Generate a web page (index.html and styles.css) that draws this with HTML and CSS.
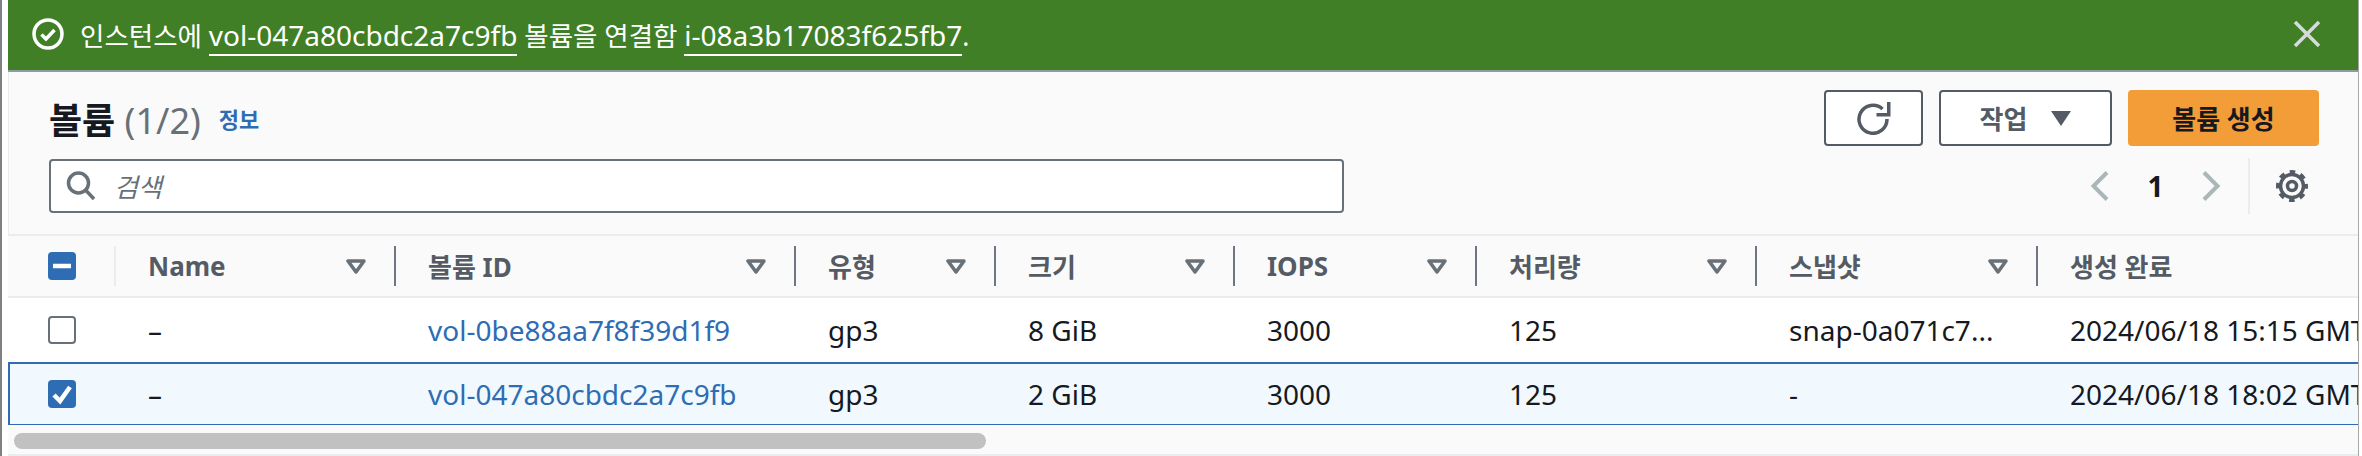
FILE: index.html
```html
<!DOCTYPE html>
<html lang="ko">
<head>
    <meta charset="UTF-8">
    <title>볼륨</title>
    <link rel="stylesheet" href="styles.css">
</head>
<body>
    <div class="frame">
        <!-- Flash message -->
        <div class="flash">
            <svg class="flash-icon" viewBox="0 0 32 32"><circle cx="16" cy="16" r="14"/><path d="M9.500 16.500l4.500 4.500 8.500-9"/></svg>
            <span class="flash-text">인스턴스에 <a>vol-047a80cbdc2a7c9fb</a> 볼륨을 연결함 <a>i-08a3b17083f625fb7</a>.</span>
            <svg class="flash-close" viewBox="0 0 28 28"><path d="M2 2l24 24M26 2L2 26"/></svg>
        </div>

        <!-- Header -->
        <div class="panel-head">
            <div class="title-row">
                <h2>볼륨 <span class="count">(1/2)</span></h2>
                <a class="info">정보</a>
                <div class="actions">
                    <button class="btn btn-icon">
                        <svg viewBox="0 0 34 34"><path class="stroke" d="M25.500 8A14 14 0 1 0 30 18"/><path class="fill" d="M30 1h3.500v14.500h-14v-3.500h10.500z"/></svg>
                    </button>
                    <button class="btn btn-menu">작업<span class="caret"></span></button>
                    <button class="btn btn-primary">볼륨 생성</button>
                </div>
            </div>
            <div class="filter-row">
                <div class="search">
                    <svg viewBox="0 0 32 32"><circle cx="13.500" cy="13" r="10"/><path d="M21 20.500l8 8.500"/></svg>
                    <span>검색</span>
                </div>
                <div class="pager">
                    <svg class="chev" viewBox="0 0 20 32"><path d="M17 2.500L3.500 16 17 29.500"/></svg>
                    <span class="page-no">1</span>
                    <svg class="chev" viewBox="0 0 20 32"><path d="M3 2.500L16.500 16 3 29.500"/></svg>
                    <div class="pager-gear">
                        <svg viewBox="0 0 34 34"><circle class="teeth" cx="17" cy="17" r="14"/><circle cx="17" cy="17" r="11.500"/><circle cx="17" cy="17" r="4.500"/></svg>
                    </div>
                </div>
            </div>
        </div>

        <!-- Volumes table -->
        <div class="table-wrap">
            <table>
                <colgroup>
                    <col class="c-check"><col class="c-name"><col class="c-id"><col class="c-type"><col class="c-size"><col class="c-iops"><col class="c-thru"><col class="c-snap"><col class="c-date">
                </colgroup>
                <thead>
                    <tr>
                        <th><div class="th-in first"><span class="box on"><svg viewBox="0 0 28 28"><path d="M5 14h18"/></svg></span></div></th>
                        <th><div class="th-in"><span>Name</span><svg class="sort" viewBox="0 0 20 15"><path d="M2 2h16l-8 11z"/></svg></div></th>
                        <th><div class="th-in"><span>볼륨 ID</span><svg class="sort" viewBox="0 0 20 15"><path d="M2 2h16l-8 11z"/></svg></div></th>
                        <th><div class="th-in"><span>유형</span><svg class="sort" viewBox="0 0 20 15"><path d="M2 2h16l-8 11z"/></svg></div></th>
                        <th><div class="th-in"><span>크기</span><svg class="sort" viewBox="0 0 20 15"><path d="M2 2h16l-8 11z"/></svg></div></th>
                        <th><div class="th-in"><span>IOPS</span><svg class="sort" viewBox="0 0 20 15"><path d="M2 2h16l-8 11z"/></svg></div></th>
                        <th><div class="th-in"><span>처리량</span><svg class="sort" viewBox="0 0 20 15"><path d="M2 2h16l-8 11z"/></svg></div></th>
                        <th><div class="th-in"><span>스냅샷</span><svg class="sort" viewBox="0 0 20 15"><path d="M2 2h16l-8 11z"/></svg></div></th>
                        <th><div class="th-in last"><span>생성 완료</span></div></th>
                    </tr>
                </thead>
                <tbody>
                    <tr>
                        <td class="check-cell"><span class="box"></span></td>
                        <td>–</td>
                        <td><a>vol-0be88aa7f8f39d1f9</a></td>
                        <td>gp3</td>
                        <td>8 GiB</td>
                        <td>3000</td>
                        <td>125</td>
                        <td>snap-0a071c7...</td>
                        <td>2024/06/18 15:15 GMT+9</td>
                    </tr>
                    <tr class="selected">
                        <td class="check-cell"><span class="box on"><svg viewBox="0 0 28 28"><path d="M6 15l6 6 10-14"/></svg></span></td>
                        <td>–</td>
                        <td><a>vol-047a80cbdc2a7c9fb</a></td>
                        <td>gp3</td>
                        <td>2 GiB</td>
                        <td>3000</td>
                        <td>125</td>
                        <td>-</td>
                        <td>2024/06/18 18:02 GMT+9</td>
                    </tr>
                </tbody>
            </table>
        </div>

        <!-- Scrollbar -->
        <div class="scroll-track"><div class="scroll-thumb"></div></div>
    </div>
</body>
</html>
```

FILE: styles.css
```css
* {
    box-sizing: border-box;
}
html, body {
    margin: 0;
    height: 456px;
    overflow: hidden;
    background: #fff;
}
body {
    font-family: "Noto Sans", "Noto Sans CJK KR", sans-serif;
    font-size: 28px;
    color: #16191f;
}
.frame {
    width: 2359px;
    height: 456px;
    padding-left: 6px;
    border-left: 2px solid #808080;
    border-right: 1px solid #a8a8a8;
    background: #fff;
}

/* flash */
.flash {
    height: 72px;
    padding: 0 37px 2px 24px;
    background: #407f26;
    border-bottom: 2px solid #8c9ca0;
    color: #fff;
    display: flex;
    align-items: center;
}
.flash-icon {
    width: 32px;
    height: 32px;
    fill: none;
    stroke: #fff;
    stroke-width: 3.500;
    margin-right: 16px;
}
.flash-text {
    font-size: 26.500px;
}
.flash-text a {
    font-size: 28px;
    text-decoration: none;
    border-bottom: 2px solid #fff;
}
.flash-close {
    width: 28px;
    height: 28px;
    margin-left: auto;
    fill: none;
    stroke: #d5dbdb;
    stroke-width: 3.500;
}

/* header */
.panel-head {
    height: 162px;
    padding: 18px 39px 0 40px;
    background: #fafafa;
    border-left: 1px solid #e9ebed;
}
.title-row {
    display: flex;
    align-items: center;
    height: 56px;
}
h2 {
    margin: 0;
    font-size: 36px;
    font-weight: 700;
}
.count {
    font-weight: 400;
    color: #687078;
}
.info {
    margin-left: 18px;
    font-size: 22px;
    font-weight: 700;
    color: #2e6db4;
}
.actions {
    margin-left: auto;
    display: flex;
    gap: 16px;
}
.btn {
    height: 56px;
    border: 2px solid #545b64;
    border-radius: 4px;
    background: #fff;
    color: #545b64;
    font: inherit;
    font-weight: 700;
    font-size: 26px;
    display: flex;
    align-items: center;
    justify-content: center;
}
.btn-icon {
    width: 99px;
}
.btn-icon svg {
    width: 34px;
    height: 34px;
}
.btn-icon .stroke {
    fill: none;
    stroke: #545b64;
    stroke-width: 3.500;
}
.btn-icon .fill {
    fill: #545b64;
}
.btn-menu {
    width: 173px;
    gap: 24px;
}
.caret {
    width: 0;
    height: 0;
    border-left: 10px solid transparent;
    border-right: 10px solid transparent;
    border-top: 15px solid #545b64;
}
.btn-primary {
    width: 191px;
    background: #f29d38;
    border-color: #f29d38;
    color: #16191f;
}
.filter-row {
    display: flex;
    align-items: center;
    margin-top: 13px;
    height: 54px;
}
.search {
    width: 1295px;
    height: 54px;
    background: #fff;
    border: 2px solid #687078;
    border-radius: 4px;
    padding-left: 14px;
    display: flex;
    align-items: center;
    gap: 17px;
    color: #687078;
    font-size: 26px;
    font-style: italic;
}
.search svg {
    width: 32px;
    height: 32px;
    fill: none;
    stroke: #687078;
    stroke-width: 3.500;
}
.pager {
    margin-left: auto;
    margin-right: 10px;
    display: flex;
    align-items: center;
    height: 56px;
}
.chev {
    width: 20px;
    height: 32px;
    fill: none;
    stroke: #aab7b8;
    stroke-width: 4;
}
.page-no {
    width: 91px;
    text-align: center;
    font-weight: 700;
}
.pager-gear {
    margin-left: 27px;
    padding-left: 25px;
    height: 56px;
    border-left: 2px solid #eaeded;
    display: flex;
    align-items: center;
}
.pager-gear svg {
    width: 34px;
    height: 34px;
    fill: none;
    stroke: #545b64;
    stroke-width: 3.500;
}
.pager-gear .teeth {
    stroke-width: 4;
    stroke-dasharray: 5.500 5.500;
    stroke-dashoffset: 2.750;
}

/* table */
.table-wrap {
    overflow: hidden;
    height: 191px;
    background: #fff;
}
table {
    table-layout: fixed;
    border-collapse: separate;
    border-spacing: 0;
    width: 2600px;
}
.c-check { width: 108px; }
.c-name { width: 280px; }
.c-id { width: 400px; }
.c-type { width: 200px; }
.c-size { width: 239px; }
.c-iops { width: 242px; }
.c-thru { width: 280px; }
.c-snap { width: 281px; }
th {
    height: 64px;
    padding: 0;
    background: #fafafa;
    border-top: 2px solid #eaeded;
    border-bottom: 2px solid #eaeded;
    color: #545b64;
    font-size: 26px;
    font-weight: 700;
    text-align: left;
}
.th-in {
    height: 40px;
    padding: 0 28px 0 32px;
    border-right: 2px solid #6f7681;
    display: flex;
    align-items: center;
    justify-content: space-between;
}
.th-in.first {
    border-right-color: #eaeded;
    padding: 0 0 0 40px;
}
.th-in.last {
    border-right: 0;
}
.sort {
    width: 20px;
    height: 15px;
    fill: none;
    stroke: #687078;
    stroke-width: 3.500;
    stroke-linejoin: round;
}
td {
    height: 64px;
    padding: 0 0 0 32px;
    white-space: nowrap;
    overflow: hidden;
}
td a {
    color: #2e6db4;
}
td.check-cell {
    padding-left: 40px;
}
.selected td {
    background: #f1f9fe;
    border-top: 2px solid #2e6db4;
    border-bottom: 2px solid #2e6db4;
}
.selected td:first-child {
    border-left: 2px solid #2e6db4;
    padding-left: 38px;
}
.box {
    display: block;
    width: 28px;
    height: 28px;
    border: 2px solid #687078;
    border-radius: 4px;
    background: #fff;
}
.box.on {
    background: #2e6db4;
    border: 0;
}
.box svg {
    display: block;
    width: 28px;
    height: 28px;
    fill: none;
    stroke: #fff;
    stroke-width: 4.500;
}

/* scrollbar */
.scroll-track {
    height: 31px;
    padding: 8px 0 0 6px;
    background: #fafafa;
    border-bottom: 2px solid #eaeded;
}
.scroll-thumb {
    width: 972px;
    height: 16px;
    border-radius: 8px;
    background: #c1c1c1;
}
```
